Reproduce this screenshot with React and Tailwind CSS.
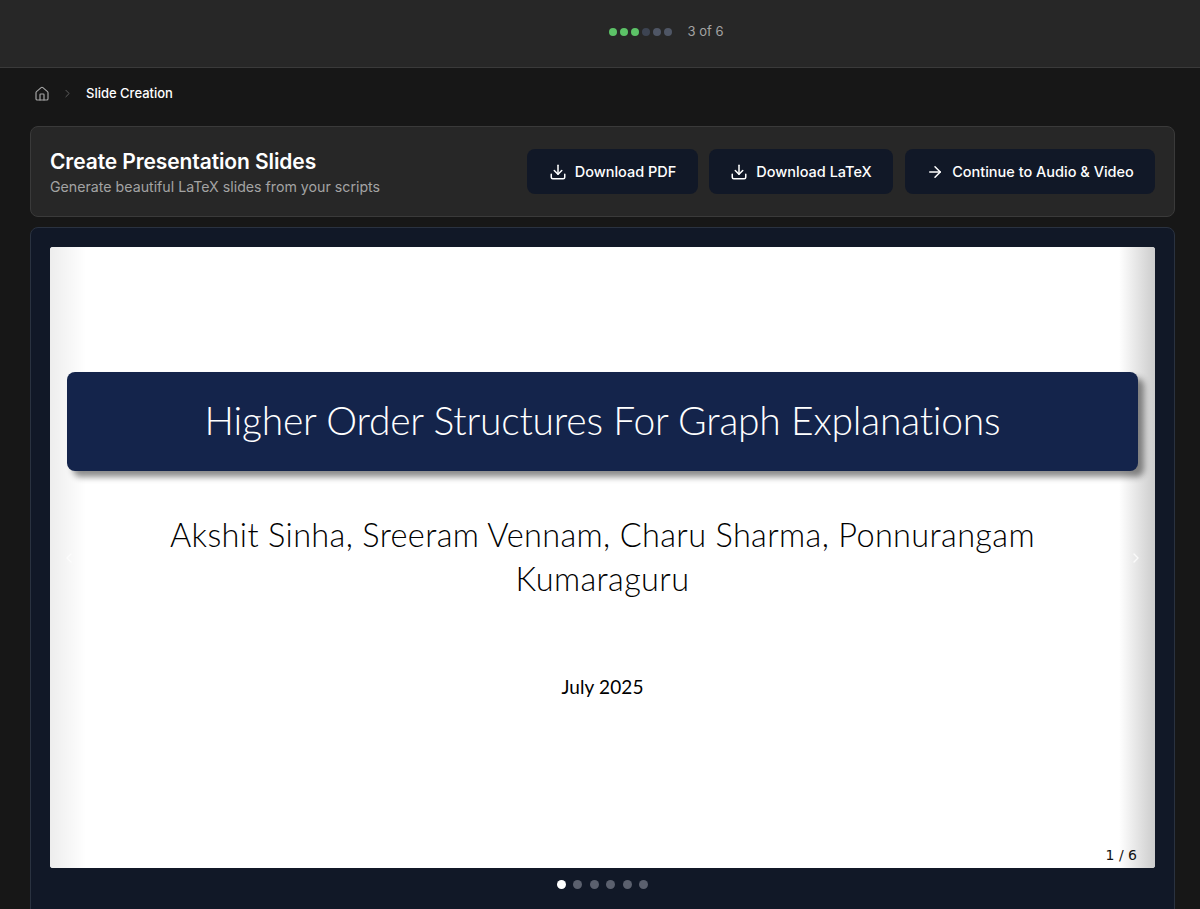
import { Home, ChevronRight, ChevronLeft, Download, ArrowRight } from "lucide-react"

const steps = ["done", "done", "done", "todo", "next", "next"]

const ActionButton = ({ icon: Icon, label, className }) => (
  <button className={`flex h-[45px] items-center justify-center gap-2 rounded-lg bg-[#111827] pt-[1px] text-[14.5px] font-medium text-white ${className}`}>
    <Icon className="h-[18px] w-[18px]" strokeWidth={2} />
    {label}
  </button>
)

export default function App() {
  return (
    <div className="h-[909px] overflow-hidden bg-[#171717] font-['Inter',sans-serif]">
      {/* Header */}
      <header className="flex h-[68px] items-center justify-center border-b border-[#3a3a3a] bg-[#272727] pb-[4px] pl-[133px]">
        <div className="flex items-center gap-[15px]">
          <div className="flex gap-[3px]">
            {steps.map((s, i) => (
              <span
                key={i}
                className={
                  s === "done"
                    ? "h-2 w-2 rounded-full bg-[#5cc267]"
                    : s === "todo"
                    ? "h-2 w-2 rounded-full bg-[#3d4452]"
                    : "h-2 w-2 rounded-full bg-[#4f5665]"
                }
              />
            ))}
          </div>
          <span className="text-[13px] text-[#a3a3a3]">3 of 6</span>
        </div>
      </header>

      <main className="px-[30px] pr-[25px]">
        {/* Breadcrumb */}
        <nav className="flex h-[50px] items-center pl-[4px] pt-[1px]">
          <Home className="h-[16px] w-[16px] text-[#a3a3a3]" strokeWidth={1.8} />
          <ChevronRight className="ml-[11px] h-[13px] w-[13px] text-[#5f5f5f]" strokeWidth={1.8} />
          <span className="ml-[12px] text-[13px] font-medium text-white">Slide Creation</span>
        </nav>

        {/* Title card */}
        <section className="mt-[8px] flex h-[91px] items-center justify-between rounded-lg border border-[#3a3a3a] bg-[#272727] px-[19px]">
          <div className="pt-[2px]">
            <h1 className="text-[21px] leading-[26px] font-semibold tracking-[-0.1px] text-white">Create Presentation Slides</h1>
            <p className="mt-[2px] text-[14.2px] leading-[20px] text-[#a3a3a3]">Generate beautiful LaTeX slides from your scripts</p>
          </div>
          <div className="flex gap-[11px]">
            <ActionButton icon={Download} label="Download PDF" className="w-[171px]" />
            <ActionButton icon={Download} label="Download LaTeX" className="w-[184px]" />
            <ActionButton icon={ArrowRight} label="Continue to Audio & Video" className="ml-[1px] w-[250px]" />
          </div>
        </section>

        {/* Slide viewer */}
        <section className="mt-[10px] h-[690px] rounded-lg border border-[#2a3240] bg-[#111827] px-[19px] pt-[19px]">
          <div className="relative flex h-[621px] flex-col items-center overflow-hidden rounded-[3px] bg-white px-[16px] pt-[125px] font-['Lato',sans-serif]">
            <div className="absolute inset-y-0 left-0 w-[36px] bg-gradient-to-r from-[#ededed] to-white/0" />
            <div className="absolute inset-y-0 right-0 w-[36px] bg-gradient-to-l from-[#cccccc] to-white/0" />

            <div className="relative z-10 flex h-[99px] w-[1071px] shrink-0 items-center justify-center rounded-[8px] bg-[#14244b] pb-[3px] shadow-[6px_6px_6px_rgba(0,0,0,0.45)]">
              <h2 className="text-[39px] font-light tracking-[-0.2px] text-white">Higher Order Structures For Graph Explanations</h2>
            </div>

            <p className="relative mt-[42px] w-[900px] text-center text-[32.5px] leading-[44px] font-light tracking-[0.35px] text-black">
              Akshit Sinha, Sreeram Vennam, Charu Sharma, Ponnurangam Kumaraguru
            </p>

            <p className="relative mt-[72px] text-[19px] tracking-[0.1px] text-black">July 2025</p>

            <ChevronLeft className="absolute top-[303px] left-[11px] h-4 w-4 text-white/70" strokeWidth={2} />
            <ChevronRight className="absolute top-[303px] right-[11px] h-4 w-4 text-white/80" strokeWidth={2} />
            <span className="absolute right-[18px] bottom-[2px] font-['DejaVu_Sans',sans-serif] text-[14px] font-medium text-[#111]">1 / 6</span>
          </div>

          {/* Pager */}
          <div className="mt-[12px] flex justify-center gap-[7.5px]">
            {[0, 1, 2, 3, 4, 5].map((i) => (
              <span key={i} className={i === 0 ? "h-[9px] w-[9px] rounded-full bg-white" : "h-[9px] w-[9px] rounded-full bg-[#5b606e]"} />
            ))}
          </div>
        </section>
      </main>
    </div>
  )
}
